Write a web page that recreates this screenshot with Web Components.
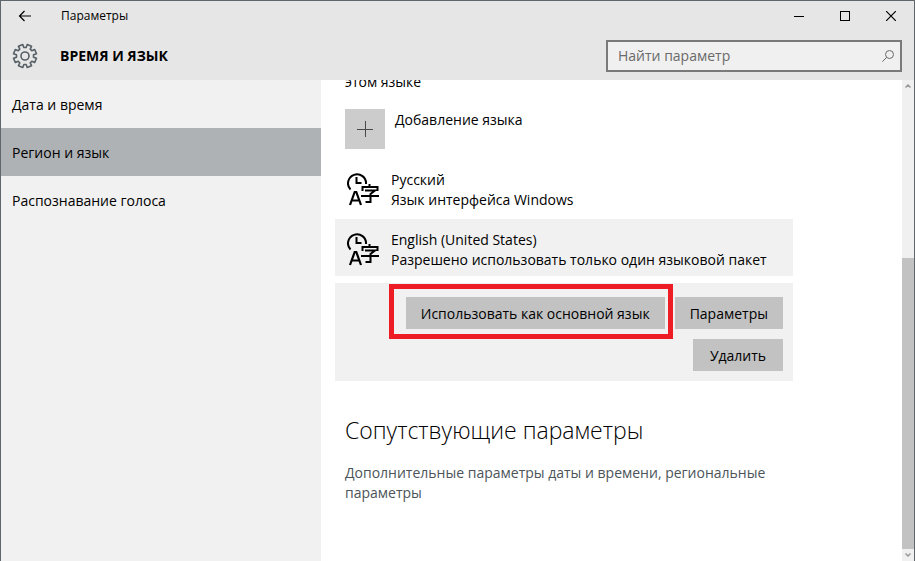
<!DOCTYPE html>
<html lang="ru">
<head>
<meta charset="utf-8">
<title>Параметры</title>
<style>
    html, body {
        height: 100%;
        margin: 0;
    }
    body {
        font-family: "Open Sans", "Noto Sans", sans-serif;
        font-size: 14px;
        line-height: 20px;
        color: #000000;
        overflow: hidden;
    }
</style>
</head>
<body>
<settings-window>
    <title-bar slot="top">Параметры</title-bar>
    <page-header slot="top">ВРЕМЯ И ЯЗЫК</page-header>
    <nav-list slot="side">
        <nav-item href="#date">Дата и время</nav-item>
        <nav-item href="#region" current>Регион и язык</nav-item>
        <nav-item href="#speech">Распознавание голоса</nav-item>
    </nav-list>
    <language-page></language-page>
    <scroll-bar slot="scroll"></scroll-bar>
</settings-window>

<script>
const define = (name, html) => {
    customElements.define(name, class extends HTMLElement {
        constructor() {
            super();
            this.attachShadow({ mode: 'open' }).innerHTML = html;
        }
    });
};

define('settings-window', `
    <style>
        :host {
            display: flex;
            flex-direction: column;
            box-sizing: border-box;
            height: 100vh;
            border: 1px solid #5f676c;
            border-bottom: none;
            background: #ffffff;
        }
        .body {
            display: flex;
            flex: 1;
            min-height: 0;
        }
        aside {
            flex: 0 0 320px;
            background: #f1f1f1;
        }
        main {
            flex: 1;
            min-width: 0;
            overflow: hidden;
        }
    </style>
    <slot name="top"></slot>
    <div class="body">
        <aside><slot name="side"></slot></aside>
        <main><slot></slot></main>
        <slot name="scroll"></slot>
    </div>
`);

define('title-bar', `
    <style>
        :host {
            display: flex;
            align-items: center;
            height: 30px;
            background: #e6e6e6;
            font-size: 12px;
        }
        button {
            display: flex;
            align-items: center;
            justify-content: center;
            width: 46px;
            height: 30px;
            padding: 0;
            border: none;
            background: none;
        }
        .back {
            width: 48px;
        }
        .title {
            flex: 1;
            padding-left: 12px;
        }
        svg {
            fill: none;
            stroke: #000000;
        }
    </style>
    <button class="back" aria-label="Назад">
        <svg width="14" height="12" viewBox="0 0 14 12"><path d="M13 6H1.500M6.500 1L1.500 6L6.500 11" stroke-width="1.200"/></svg>
    </button>
    <span class="title"><slot></slot></span>
    <button aria-label="Свернуть">
        <svg width="10" height="10" viewBox="0 0 10 10"><path d="M0 5.500H10"/></svg>
    </button>
    <button aria-label="Развернуть">
        <svg width="10" height="10" viewBox="0 0 10 10"><rect x=".5" y=".5" width="9" height="9"/></svg>
    </button>
    <button aria-label="Закрыть">
        <svg width="10" height="10" viewBox="0 0 10 10"><path d="M0 0L10 10M10 0L0 10" stroke-width="1.200"/></svg>
    </button>
`);

define('gear-icon', `
    <style>
        :host, svg {
            display: block;
        }
    </style>
    <svg width="26" height="26" viewBox="-13 -13 26 26" fill="none" stroke="#566066" stroke-width="1.600" stroke-linejoin="round">
        <circle r="4"/>
        <path/>
    </svg>
`);

// Outline of an eight-toothed gear, four points for each tooth
const gearPath = () => {
    const points = [];
    for (let i = 0; i < 8; i++) {
        const middle = (i + 0.5) * Math.PI / 4;
        [[-0.26, 8.6], [-0.2, 11.7], [0.2, 11.7], [0.26, 8.6]].forEach(([offset, r]) => {
            points.push(`${(Math.cos(middle + offset) * r).toFixed(2)} ${(Math.sin(middle + offset) * r).toFixed(2)}`);
        });
    }
    return `M${points.join('L')}Z`;
};

define('search-box', `
    <style>
        :host {
            display: flex;
            align-items: center;
            box-sizing: border-box;
            width: 296px;
            height: 32px;
            border: 2px solid #7a7a7a;
            background: #f0f0f0;
        }
        input {
            flex: 1;
            min-width: 0;
            padding: 0 0 0 10px;
            border: none;
            outline: none;
            background: none;
            font: inherit;
        }
        input::placeholder {
            color: #6a6a6a;
            opacity: 1;
        }
        button {
            display: flex;
            padding: 0 6px;
            border: none;
            background: none;
        }
    </style>
    <input type="text" aria-label="Найти параметр" placeholder="Найти параметр">
    <button aria-label="Поиск">
        <svg width="12" height="12" viewBox="0 0 12 12" fill="none" stroke="#6a6a6a"><circle cx="7.500" cy="4.500" r="4"/><path d="M4.700 7.300L.3 11.700"/></svg>
    </button>
`);

define('page-header', `
    <style>
        :host {
            display: flex;
            align-items: center;
            height: 49px;
            padding: 0 12px 0 11px;
            background: #e6e6e6;
        }
        h1 {
            flex: 1;
            margin: 0;
            padding-left: 22px;
            font-size: 14px;
            font-weight: 700;
        }
    </style>
    <gear-icon></gear-icon>
    <h1><slot></slot></h1>
    <search-box></search-box>
`);

define('nav-list', `
    <style>
        :host, nav {
            display: block;
        }
    </style>
    <nav><slot></slot></nav>
`);

customElements.define('nav-item', class extends HTMLElement {
    constructor() {
        super();
        this.attachShadow({ mode: 'open' }).innerHTML = `
            <style>
                :host {
                    display: block;
                }
                :host([current]) {
                    background: #aeb2b5;
                }
                a {
                    display: block;
                    padding: 15px 11px 13px;
                    color: inherit;
                    text-decoration: none;
                }
            </style>
            <a><slot></slot></a>
        `;
    }

    connectedCallback() {
        const link = this.shadowRoot.querySelector('a');
        link.href = this.getAttribute('href');
        if (this.hasAttribute('current')) {
            link.setAttribute('aria-current', 'page');
        }
    }
});

define('language-item', `
    <style>
        :host {
            display: flex;
            gap: 12px;
            padding: 11px 12px 6px;
        }
        :host([selected]) {
            background: #f1f1f1;
        }
        svg {
            flex: none;
            margin-top: 2px;
            fill: none;
            stroke: #000000;
            stroke-width: 2;
        }
        .name, .note {
            display: block;
        }
    </style>
    <svg width="32" height="34" viewBox="0 0 32 34" aria-hidden="true">
        <path d="M3.500 17.500A9 9 0 1 1 19 12M9.500 5V11H14.500"/>
        <path d="M3 33L7.700 20H9.300L14 33M4.800 28.500H12.200" stroke-width="2.200"/>
        <path d="M22.500 12V15M15.500 19V15H30.500V19M18 18.500H28L23.500 22V30H18.500M14 24H32"/>
    </svg>
    <div>
        <span class="name"><slot name="name"></slot></span>
        <span class="note"><slot></slot></span>
    </div>
`);

define('push-button', `
    <style>
        :host {
            display: block;
            position: relative;
        }
        button {
            min-width: 90px;
            height: 32px;
            padding: 2px 15px 0;
            border: none;
            background: #c2c2c2;
            color: inherit;
            font: inherit;
            white-space: nowrap;
        }
        :host([marked])::after {
            content: "";
            position: absolute;
            inset: -13px -8px -10px -17px;
            border: 5px solid #ee1c24;
            pointer-events: none;
        }
    </style>
    <button><slot></slot></button>
`);

define('language-page', `
    <style>
        :host {
            display: block;
            max-width: 458px;
            padding: 0 14px;
        }
        .intro {
            margin: -8px 10px 17px;
        }
        .add {
            display: flex;
            gap: 10px;
            margin: 0 10px 10px;
            padding: 0;
            border: none;
            background: none;
            color: inherit;
            font: inherit;
        }
        .add svg {
            background: #cccccc;
            stroke: #4a4a4a;
        }
        .add span {
            padding-top: 1px;
        }
        .list {
            display: grid;
            gap: 3px;
        }
        .actions {
            display: flex;
            flex-wrap: wrap;
            justify-content: flex-end;
            gap: 10px;
            margin-top: 7px;
            padding: 14px 10px 10px;
            background: #f1f1f1;
        }
        h2 {
            margin: 33px 10px 17px;
            font-size: 23px;
            font-weight: 300;
            line-height: 32px;
        }
        a {
            display: block;
            margin: 0 10px;
            color: #4c5459;
            text-decoration: none;
        }
    </style>
    <p class="intro">этом языке</p>
    <button class="add">
        <svg width="40" height="40" viewBox="0 0 40 40" aria-hidden="true"><path d="M12 20.500H28M20.500 12V28"/></svg>
        <span>Добавление языка</span>
    </button>
    <div class="list">
        <language-item><span slot="name">Русский</span>Язык интерфейса Windows</language-item>
        <language-item selected><span slot="name">English (United States)</span>Разрешено использовать только один языковой пакет</language-item>
    </div>
    <div class="actions">
        <push-button marked>Использовать как основной язык</push-button>
        <push-button>Параметры</push-button>
        <push-button>Удалить</push-button>
    </div>
    <h2>Сопутствующие параметры</h2>
    <a href="#regional">Дополнительные параметры даты и времени, региональные параметры</a>
`);

define('scroll-bar', `
    <style>
        :host {
            display: flex;
            flex-direction: column;
            flex: 0 0 12px;
            background: #f0f0f0;
        }
        button {
            display: flex;
            align-items: center;
            justify-content: center;
            height: 12px;
            padding: 0;
            border: none;
            background: none;
        }
        svg {
            fill: none;
            stroke: #9a9a9a;
            stroke-width: 1.500;
        }
        .track {
            flex: 166;
        }
        .thumb {
            flex: 291;
            background: #c2c2c2;
        }
    </style>
    <button aria-label="Вверх"><svg width="6" height="4" viewBox="0 0 6 4"><path d="M.5 3.500L3 1L5.500 3.500"/></svg></button>
    <div class="track"></div>
    <div class="thumb"></div>
    <button aria-label="Вниз"><svg width="6" height="4" viewBox="0 0 6 4"><path d="M.5 .5L3 3L5.500 .5"/></svg></button>
`);

document.querySelector('page-header').shadowRoot
    .querySelector('gear-icon').shadowRoot
    .querySelector('path').setAttribute('d', gearPath());
</script>
</body>
</html>
